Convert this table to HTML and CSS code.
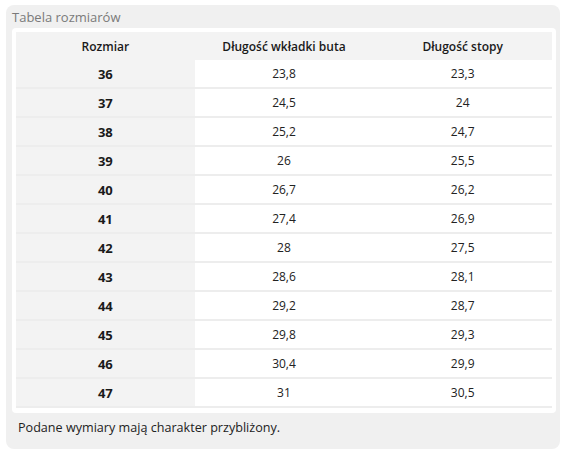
FILE: index.html
```html
<!DOCTYPE html>
<html lang="pl">
<head>
<meta charset="utf-8">
<link rel="stylesheet" href="styles.css">
</head>
<body>
<div class="panel">
  <div class="title">Tabela rozmiarów</div>
  <div class="card">
    <table class="sizes">
      <thead>
        <tr><th>Rozmiar</th><th>Długość wkładki buta</th><th>Długość stopy</th></tr>
      </thead>
      <tbody>
        <tr><td class="size">36</td><td>23,8</td><td>23,3</td></tr>
        <tr><td class="size">37</td><td>24,5</td><td>24</td></tr>
        <tr><td class="size">38</td><td>25,2</td><td>24,7</td></tr>
        <tr><td class="size">39</td><td>26</td><td>25,5</td></tr>
        <tr><td class="size">40</td><td>26,7</td><td>26,2</td></tr>
        <tr><td class="size">41</td><td>27,4</td><td>26,9</td></tr>
        <tr><td class="size">42</td><td>28</td><td>27,5</td></tr>
        <tr><td class="size">43</td><td>28,6</td><td>28,1</td></tr>
        <tr><td class="size">44</td><td>29,2</td><td>28,7</td></tr>
        <tr><td class="size">45</td><td>29,8</td><td>29,3</td></tr>
        <tr><td class="size">46</td><td>30,4</td><td>29,9</td></tr>
        <tr><td class="size">47</td><td>31</td><td>30,5</td></tr>
      </tbody>
    </table>
  </div>
  <div class="note">Podane wymiary mają charakter przybliżony.</div>
</div>
</body>
</html>
```
FILE: styles.css
```css
html, body {
  margin: 0;
  padding: 0;
  background: #ffffff;
}
body {
  font-family: "Open Sans", "Liberation Sans", sans-serif;
  color: #222;
}
.panel {
  margin: 5px 0 0 6px;
  width: 554px;
  height: 444px;
  box-sizing: border-box;
  background: #f0f0f0;
  border-radius: 8px;
  padding: 2px 4px 0 6px;
}
.title {
  font-size: 13px;
  line-height: 21px;
  color: #7a7a7a;
}
.card {
  background: #ffffff;
  border-radius: 4px;
  padding: 4px 4px 5px 4px;
}
.sizes {
  width: 100%;
  border-collapse: collapse;
  table-layout: fixed;
  font-size: 12px;
}
.sizes th {
  background: #f3f3f3;
  height: 28px;
  padding: 0;
  font-weight: 600;
  font-size: 12px;
  color: #1a1a1a;
  text-align: center;
}
.sizes td {
  height: 27px;
  padding: 0;
  text-align: center;
  color: #222;
  border-bottom: 2px solid #ededed;
}
.sizes td.size {
  background: #f3f3f3;
  font-weight: 700;
  font-size: 13px;
  color: #1a1a1a;
}
.note {
  font-size: 12.6px;
  line-height: 20px;
  color: #222;
  padding: 5px 0 0 6px;
}
```
